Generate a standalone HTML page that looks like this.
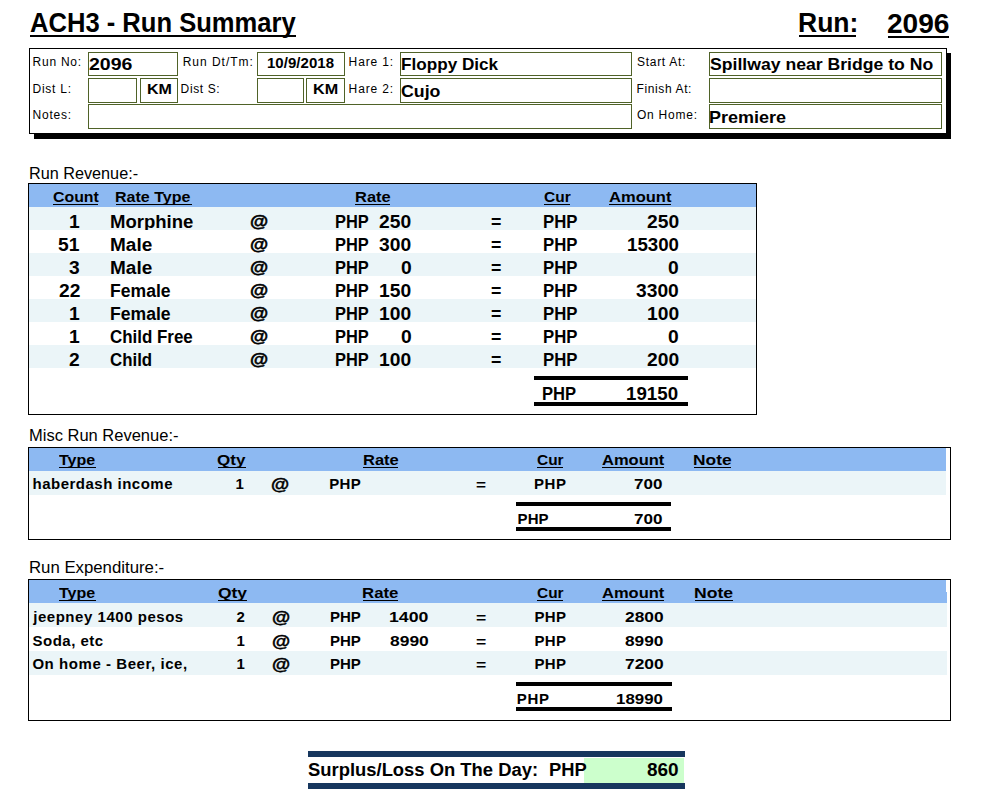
<!DOCTYPE html>
<html><head><meta charset="utf-8"><title>ACH3 - Run Summary</title>
<style>
html,body{margin:0;padding:0;background:#fff;}
body{width:991px;height:803px;position:relative;overflow:hidden;font-family:"Liberation Sans",sans-serif;color:#000;}
.a{position:absolute;}
.t{position:absolute;white-space:nowrap;line-height:1;}
</style></head><body>
<div class="t" style="left:29.96px;top:10px;font-size:27px;font-weight:bold;transform:scaleX(0.9473);transform-origin:0 0;">ACH3 - Run Summary</div>
<div class="a" style="left:30px;top:35px;width:266px;height:2px;background:#000;"></div>
<div class="t" style="left:797.83px;top:10px;font-size:27px;font-weight:bold;transform:scaleX(0.9812);transform-origin:0 0;">Run:</div>
<div class="a" style="left:799px;top:35px;width:57px;height:2px;background:#000;"></div>
<div class="t" style="left:887.43px;top:11px;font-size:27px;font-weight:bold;transform:scaleX(1.0404);transform-origin:0 0;">2096</div>
<div class="a" style="left:888px;top:36px;width:61px;height:2px;background:#000;"></div>
<div class="a" style="left:34px;top:53px;width:917px;height:86px;background:#000;"></div>
<div class="a" style="left:29px;top:48px;width:918px;height:86px;background:#fff;border:1px solid #000;box-sizing:border-box;"></div>
<div class="a" style="left:88px;top:52px;width:90px;height:24px;background:#fff;border:1px solid #4F6228;box-sizing:border-box;"></div>
<div class="a" style="left:257px;top:52px;width:88px;height:24px;background:#fff;border:1px solid #4F6228;box-sizing:border-box;"></div>
<div class="a" style="left:400px;top:52px;width:232px;height:24px;background:#fff;border:1px solid #4F6228;box-sizing:border-box;"></div>
<div class="a" style="left:709px;top:52px;width:233px;height:24px;background:#fff;border:1px solid #4F6228;box-sizing:border-box;"></div>
<div class="a" style="left:88px;top:78px;width:49px;height:25px;background:#fff;border:1px solid #4F6228;box-sizing:border-box;"></div>
<div class="a" style="left:140px;top:78px;width:38px;height:25px;background:#fff;border:1px solid #4F6228;box-sizing:border-box;"></div>
<div class="a" style="left:257px;top:78px;width:47px;height:25px;background:#fff;border:1px solid #4F6228;box-sizing:border-box;"></div>
<div class="a" style="left:306px;top:78px;width:39px;height:25px;background:#fff;border:1px solid #4F6228;box-sizing:border-box;"></div>
<div class="a" style="left:400px;top:78px;width:232px;height:25px;background:#fff;border:1px solid #4F6228;box-sizing:border-box;"></div>
<div class="a" style="left:709px;top:78px;width:233px;height:25px;background:#fff;border:1px solid #4F6228;box-sizing:border-box;"></div>
<div class="a" style="left:88px;top:104px;width:544px;height:25px;background:#fff;border:1px solid #4F6228;box-sizing:border-box;"></div>
<div class="a" style="left:709px;top:104px;width:233px;height:25px;background:#fff;border:1px solid #4F6228;box-sizing:border-box;"></div>
<div class="t" style="left:32.52px;top:56px;font-size:12px;letter-spacing:0.760px;">Run No:</div>
<div class="t" style="left:32.52px;top:83px;font-size:12px;letter-spacing:0.745px;">Dist L:</div>
<div class="t" style="left:32.52px;top:109px;font-size:12px;letter-spacing:0.780px;">Notes:</div>
<div class="t" style="left:182.72px;top:56px;font-size:12px;letter-spacing:0.971px;">Run Dt/Tm:</div>
<div class="t" style="left:180.62px;top:83px;font-size:12px;letter-spacing:0.624px;">Dist S:</div>
<div class="t" style="left:348.62px;top:56px;font-size:12px;letter-spacing:0.855px;">Hare 1:</div>
<div class="t" style="left:348.62px;top:83px;font-size:12px;letter-spacing:0.855px;">Hare 2:</div>
<div class="t" style="left:636.96px;top:56px;font-size:12px;letter-spacing:0.724px;">Start At:</div>
<div class="t" style="left:636.52px;top:83px;font-size:12px;letter-spacing:0.618px;">Finish At:</div>
<div class="t" style="left:636.93px;top:109px;font-size:12px;letter-spacing:0.783px;">On Home:</div>
<div class="t" style="left:89.02px;top:56px;font-size:17px;font-weight:bold;transform:scaleX(1.1471);transform-origin:0 0;">2096</div>
<div class="t" style="left:266.96px;top:55px;font-size:15px;font-weight:bold;letter-spacing:0.047px;">10/9/2018</div>
<div class="t" style="left:146.73px;top:81px;font-size:15px;font-weight:bold;transform:scaleX(1.0694);transform-origin:0 0;">KM</div>
<div class="t" style="left:312.52px;top:81px;font-size:15px;font-weight:bold;transform:scaleX(1.0788);transform-origin:0 0;">KM</div>
<div class="t" style="left:401.05px;top:56px;font-size:17px;font-weight:bold;transform:scaleX(1.0081);transform-origin:0 0;">Floppy Dick</div>
<div class="t" style="left:400.77px;top:83px;font-size:17px;font-weight:bold;transform:scaleX(1.0437);transform-origin:0 0;">Cujo</div>
<div class="t" style="left:710.09px;top:56px;font-size:17px;font-weight:bold;transform:scaleX(1.0363);transform-origin:0 0;">Spillway near Bridge to No</div>
<div class="t" style="left:709.40px;top:109px;font-size:17px;font-weight:bold;transform:scaleX(1.0583);transform-origin:0 0;">Premiere</div>
<div class="t" style="left:28.67px;top:166px;font-size:16px;transform:scaleX(1.0133);transform-origin:0 0;">Run Revenue:-</div>
<div class="a" style="left:28px;top:183px;width:729px;height:232px;background:#fff;border:1px solid #000;box-sizing:border-box;"></div>
<div class="a" style="left:29px;top:184px;width:727px;height:23px;background:#8DB9F2;"></div>
<div class="t" style="left:52.65px;top:189px;font-size:15.5px;font-weight:bold;transform:scaleX(1.0243);transform-origin:0 0;">Count</div>
<div class="a" style="left:53px;top:204px;width:45px;height:1px;background:#000;"></div>
<div class="t" style="left:115.43px;top:189px;font-size:15.5px;font-weight:bold;transform:scaleX(1.0343);transform-origin:0 0;">Rate Type</div>
<div class="a" style="left:116px;top:204px;width:76px;height:1px;background:#000;"></div>
<div class="t" style="left:354.50px;top:189px;font-size:15.5px;font-weight:bold;transform:scaleX(1.0615);transform-origin:0 0;">Rate</div>
<div class="a" style="left:355px;top:204px;width:35px;height:1px;background:#000;"></div>
<div class="t" style="left:543.56px;top:189px;font-size:15.5px;font-weight:bold;transform:scaleX(0.9991);transform-origin:0 0;">Cur</div>
<div class="a" style="left:544px;top:204px;width:26px;height:1px;background:#000;"></div>
<div class="t" style="left:608.79px;top:189px;font-size:15.5px;font-weight:bold;transform:scaleX(1.0661);transform-origin:0 0;">Amount</div>
<div class="a" style="left:609px;top:204px;width:62px;height:1px;background:#000;"></div>
<div class="a" style="left:29px;top:207px;width:727px;height:23px;background:#EBF5F8;"></div>
<div class="t" style="left:69.13px;top:214px;font-size:17.5px;font-weight:bold;transform:scaleX(1.1000);transform-origin:0 0;">1</div>
<div class="t" style="left:109.56px;top:214px;font-size:17.5px;font-weight:bold;transform:scaleX(1.0588);transform-origin:0 0;">Morphine</div>
<div class="t" style="left:249.94px;top:214px;font-size:16px;font-weight:bold;transform:scaleX(1.1630);transform-origin:0 0;-webkit-text-stroke:0.5px #000;">@</div>
<div class="t" style="left:334.80px;top:214px;font-size:17.5px;font-weight:bold;transform:scaleX(0.9382);transform-origin:0 0;">PHP</div>
<div class="t" style="left:379.37px;top:214px;font-size:17.5px;font-weight:bold;transform:scaleX(1.1000);transform-origin:0 0;">250</div>
<div class="t" style="left:490.76px;top:214px;font-size:17.5px;font-weight:bold;transform:scaleX(1.0142);transform-origin:0 0;">=</div>
<div class="t" style="left:542.78px;top:214px;font-size:17.5px;font-weight:bold;transform:scaleX(0.9558);transform-origin:0 0;">PHP</div>
<div class="t" style="left:647.07px;top:214px;font-size:17.5px;font-weight:bold;transform:scaleX(1.1000);transform-origin:0 0;">250</div>
<div class="a" style="left:29px;top:230px;width:727px;height:23px;background:#fff;"></div>
<div class="t" style="left:58.42px;top:237px;font-size:17.5px;font-weight:bold;transform:scaleX(1.1000);transform-origin:0 0;">51</div>
<div class="t" style="left:109.53px;top:237px;font-size:17.5px;font-weight:bold;transform:scaleX(1.0852);transform-origin:0 0;">Male</div>
<div class="t" style="left:249.94px;top:237px;font-size:16px;font-weight:bold;transform:scaleX(1.1630);transform-origin:0 0;-webkit-text-stroke:0.5px #000;">@</div>
<div class="t" style="left:334.80px;top:237px;font-size:17.5px;font-weight:bold;transform:scaleX(0.9382);transform-origin:0 0;">PHP</div>
<div class="t" style="left:379.37px;top:237px;font-size:17.5px;font-weight:bold;transform:scaleX(1.1000);transform-origin:0 0;">300</div>
<div class="t" style="left:490.76px;top:237px;font-size:17.5px;font-weight:bold;transform:scaleX(1.0142);transform-origin:0 0;">=</div>
<div class="t" style="left:542.78px;top:237px;font-size:17.5px;font-weight:bold;transform:scaleX(0.9558);transform-origin:0 0;">PHP</div>
<div class="t" style="left:627.22px;top:237px;font-size:17.5px;font-weight:bold;transform:scaleX(1.0674);transform-origin:0 0;">15300</div>
<div class="a" style="left:29px;top:253px;width:727px;height:23px;background:#EBF5F8;"></div>
<div class="t" style="left:69.29px;top:260px;font-size:17.5px;font-weight:bold;transform:scaleX(1.1000);transform-origin:0 0;">3</div>
<div class="t" style="left:109.53px;top:260px;font-size:17.5px;font-weight:bold;transform:scaleX(1.0852);transform-origin:0 0;">Male</div>
<div class="t" style="left:249.94px;top:260px;font-size:16px;font-weight:bold;transform:scaleX(1.1630);transform-origin:0 0;-webkit-text-stroke:0.5px #000;">@</div>
<div class="t" style="left:334.80px;top:260px;font-size:17.5px;font-weight:bold;transform:scaleX(0.9382);transform-origin:0 0;">PHP</div>
<div class="t" style="left:400.78px;top:260px;font-size:17.5px;font-weight:bold;transform:scaleX(1.1000);transform-origin:0 0;">0</div>
<div class="t" style="left:490.76px;top:260px;font-size:17.5px;font-weight:bold;transform:scaleX(1.0142);transform-origin:0 0;">=</div>
<div class="t" style="left:542.78px;top:260px;font-size:17.5px;font-weight:bold;transform:scaleX(0.9558);transform-origin:0 0;">PHP</div>
<div class="t" style="left:668.48px;top:260px;font-size:17.5px;font-weight:bold;transform:scaleX(1.1000);transform-origin:0 0;">0</div>
<div class="a" style="left:29px;top:276px;width:727px;height:23px;background:#fff;"></div>
<div class="t" style="left:58.66px;top:283px;font-size:17.5px;font-weight:bold;transform:scaleX(1.1000);transform-origin:0 0;">22</div>
<div class="t" style="left:109.62px;top:283px;font-size:17.5px;font-weight:bold;transform:scaleX(1.0044);transform-origin:0 0;">Female</div>
<div class="t" style="left:249.94px;top:283px;font-size:16px;font-weight:bold;transform:scaleX(1.1630);transform-origin:0 0;-webkit-text-stroke:0.5px #000;">@</div>
<div class="t" style="left:334.80px;top:283px;font-size:17.5px;font-weight:bold;transform:scaleX(0.9382);transform-origin:0 0;">PHP</div>
<div class="t" style="left:379.37px;top:283px;font-size:17.5px;font-weight:bold;transform:scaleX(1.1000);transform-origin:0 0;">150</div>
<div class="t" style="left:490.76px;top:283px;font-size:17.5px;font-weight:bold;transform:scaleX(1.0142);transform-origin:0 0;">=</div>
<div class="t" style="left:542.78px;top:283px;font-size:17.5px;font-weight:bold;transform:scaleX(0.9558);transform-origin:0 0;">PHP</div>
<div class="t" style="left:636.37px;top:283px;font-size:17.5px;font-weight:bold;transform:scaleX(1.1000);transform-origin:0 0;">3300</div>
<div class="a" style="left:29px;top:299px;width:727px;height:23px;background:#EBF5F8;"></div>
<div class="t" style="left:69.13px;top:306px;font-size:17.5px;font-weight:bold;transform:scaleX(1.1000);transform-origin:0 0;">1</div>
<div class="t" style="left:109.62px;top:306px;font-size:17.5px;font-weight:bold;transform:scaleX(1.0044);transform-origin:0 0;">Female</div>
<div class="t" style="left:249.94px;top:306px;font-size:16px;font-weight:bold;transform:scaleX(1.1630);transform-origin:0 0;-webkit-text-stroke:0.5px #000;">@</div>
<div class="t" style="left:334.80px;top:306px;font-size:17.5px;font-weight:bold;transform:scaleX(0.9382);transform-origin:0 0;">PHP</div>
<div class="t" style="left:379.37px;top:306px;font-size:17.5px;font-weight:bold;transform:scaleX(1.1000);transform-origin:0 0;">100</div>
<div class="t" style="left:490.76px;top:306px;font-size:17.5px;font-weight:bold;transform:scaleX(1.0142);transform-origin:0 0;">=</div>
<div class="t" style="left:542.78px;top:306px;font-size:17.5px;font-weight:bold;transform:scaleX(0.9558);transform-origin:0 0;">PHP</div>
<div class="t" style="left:647.07px;top:306px;font-size:17.5px;font-weight:bold;transform:scaleX(1.1000);transform-origin:0 0;">100</div>
<div class="a" style="left:29px;top:322px;width:727px;height:23px;background:#fff;"></div>
<div class="t" style="left:69.13px;top:329px;font-size:17.5px;font-weight:bold;transform:scaleX(1.1000);transform-origin:0 0;">1</div>
<div class="t" style="left:110.11px;top:329px;font-size:17.5px;font-weight:bold;transform:scaleX(0.9673);transform-origin:0 0;">Child Free</div>
<div class="t" style="left:249.94px;top:329px;font-size:16px;font-weight:bold;transform:scaleX(1.1630);transform-origin:0 0;-webkit-text-stroke:0.5px #000;">@</div>
<div class="t" style="left:334.80px;top:329px;font-size:17.5px;font-weight:bold;transform:scaleX(0.9382);transform-origin:0 0;">PHP</div>
<div class="t" style="left:400.78px;top:329px;font-size:17.5px;font-weight:bold;transform:scaleX(1.1000);transform-origin:0 0;">0</div>
<div class="t" style="left:490.76px;top:329px;font-size:17.5px;font-weight:bold;transform:scaleX(1.0142);transform-origin:0 0;">=</div>
<div class="t" style="left:542.78px;top:329px;font-size:17.5px;font-weight:bold;transform:scaleX(0.9558);transform-origin:0 0;">PHP</div>
<div class="t" style="left:668.48px;top:329px;font-size:17.5px;font-weight:bold;transform:scaleX(1.1000);transform-origin:0 0;">0</div>
<div class="a" style="left:29px;top:345px;width:727px;height:23px;background:#EBF5F8;"></div>
<div class="t" style="left:69.36px;top:352px;font-size:17.5px;font-weight:bold;transform:scaleX(1.1000);transform-origin:0 0;">2</div>
<div class="t" style="left:110.11px;top:352px;font-size:17.5px;font-weight:bold;transform:scaleX(0.9625);transform-origin:0 0;">Child</div>
<div class="t" style="left:249.94px;top:352px;font-size:16px;font-weight:bold;transform:scaleX(1.1630);transform-origin:0 0;-webkit-text-stroke:0.5px #000;">@</div>
<div class="t" style="left:334.80px;top:352px;font-size:17.5px;font-weight:bold;transform:scaleX(0.9382);transform-origin:0 0;">PHP</div>
<div class="t" style="left:379.37px;top:352px;font-size:17.5px;font-weight:bold;transform:scaleX(1.1000);transform-origin:0 0;">100</div>
<div class="t" style="left:490.76px;top:352px;font-size:17.5px;font-weight:bold;transform:scaleX(1.0142);transform-origin:0 0;">=</div>
<div class="t" style="left:542.78px;top:352px;font-size:17.5px;font-weight:bold;transform:scaleX(0.9558);transform-origin:0 0;">PHP</div>
<div class="t" style="left:647.07px;top:352px;font-size:17.5px;font-weight:bold;transform:scaleX(1.1000);transform-origin:0 0;">200</div>
<div class="a" style="left:534px;top:376px;width:154px;height:4px;background:#000;"></div>
<div class="t" style="left:541.89px;top:386px;font-size:17.5px;font-weight:bold;transform:scaleX(0.9470);transform-origin:0 0;">PHP</div>
<div class="t" style="left:626.32px;top:386px;font-size:17.5px;font-weight:bold;transform:scaleX(1.0695);transform-origin:0 0;">19150</div>
<div class="a" style="left:534px;top:402px;width:154px;height:4px;background:#000;"></div>
<div class="t" style="left:28.65px;top:428px;font-size:16px;transform:scaleX(1.0313);transform-origin:0 0;">Misc Run Revenue:-</div>
<div class="a" style="left:28px;top:447px;width:923px;height:93px;background:#fff;border:1px solid #000;box-sizing:border-box;"></div>
<div class="a" style="left:29px;top:448px;width:917px;height:23px;background:#8DB9F2;"></div>
<div class="a" style="left:29px;top:471px;width:917px;height:24px;background:#EBF5F8;"></div>
<div class="t" style="left:59.12px;top:452px;font-size:15.5px;font-weight:bold;transform:scaleX(1.0346);transform-origin:0 0;">Type</div>
<div class="a" style="left:59px;top:467px;width:37px;height:1px;background:#000;"></div>
<div class="t" style="left:217.30px;top:452px;font-size:15.5px;font-weight:bold;transform:scaleX(1.0988);transform-origin:0 0;">Qty</div>
<div class="a" style="left:218px;top:467px;width:28px;height:1px;background:#000;"></div>
<div class="t" style="left:362.50px;top:452px;font-size:15.5px;font-weight:bold;transform:scaleX(1.0647);transform-origin:0 0;">Rate</div>
<div class="a" style="left:363px;top:467px;width:35px;height:1px;background:#000;"></div>
<div class="t" style="left:536.67px;top:452px;font-size:15.5px;font-weight:bold;transform:scaleX(0.9952);transform-origin:0 0;">Cur</div>
<div class="a" style="left:537px;top:467px;width:26px;height:1px;background:#000;"></div>
<div class="t" style="left:601.89px;top:452px;font-size:15.5px;font-weight:bold;transform:scaleX(1.0644);transform-origin:0 0;">Amount</div>
<div class="a" style="left:602px;top:467px;width:62px;height:1px;background:#000;"></div>
<div class="t" style="left:693.44px;top:452px;font-size:15.5px;font-weight:bold;transform:scaleX(1.1193);transform-origin:0 0;">Note</div>
<div class="a" style="left:694px;top:467px;width:37px;height:1px;background:#000;"></div>
<div class="t" style="left:32.55px;top:476px;font-size:15px;font-weight:bold;letter-spacing:0.495px;">haberdash income</div>
<div class="t" style="left:235.38px;top:476px;font-size:15px;font-weight:bold;">1</div>
<div class="t" style="left:270.94px;top:476px;font-size:16.5px;font-weight:bold;transform:scaleX(1.1277);transform-origin:0 0;-webkit-text-stroke:0.45px #000;">@</div>
<div class="t" style="left:329.20px;top:476px;font-size:15px;font-weight:bold;letter-spacing:0.337px;">PHP</div>
<div class="t" style="left:475.69px;top:477px;font-size:15px;font-weight:bold;transform:scaleX(1.1433);transform-origin:0 0;">=</div>
<div class="t" style="left:533.90px;top:476px;font-size:15px;font-weight:bold;letter-spacing:0.687px;">PHP</div>
<div class="t" style="left:634.27px;top:476px;font-size:15px;font-weight:bold;transform:scaleX(1.1318);transform-origin:0 0;">700</div>
<div class="a" style="left:516px;top:502px;width:155px;height:4px;background:#000;"></div>
<div class="t" style="left:517.60px;top:511px;font-size:15px;font-weight:bold;letter-spacing:0.037px;">PHP</div>
<div class="t" style="left:634.27px;top:511px;font-size:15px;font-weight:bold;transform:scaleX(1.1360);transform-origin:0 0;">700</div>
<div class="a" style="left:516px;top:527px;width:155px;height:4px;background:#000;"></div>
<div class="t" style="left:28.62px;top:560px;font-size:16px;transform:scaleX(1.0478);transform-origin:0 0;">Run Expenditure:-</div>
<div class="a" style="left:28px;top:579px;width:923px;height:142px;background:#fff;border:1px solid #000;box-sizing:border-box;"></div>
<div class="a" style="left:29px;top:580px;width:917px;height:12px;background:#8DB9F2;"></div>
<div class="a" style="left:29px;top:592px;width:918px;height:11px;background:#8DB9F2;"></div>
<div class="a" style="left:29px;top:603px;width:918px;height:24px;background:#EBF5F8;"></div>
<div class="a" style="left:29px;top:651px;width:918px;height:24px;background:#EBF5F8;"></div>
<div class="t" style="left:59.12px;top:585px;font-size:15.5px;font-weight:bold;transform:scaleX(1.0346);transform-origin:0 0;">Type</div>
<div class="a" style="left:59px;top:600px;width:37px;height:1px;background:#000;"></div>
<div class="t" style="left:218.09px;top:585px;font-size:15.5px;font-weight:bold;transform:scaleX(1.1226);transform-origin:0 0;">Qty</div>
<div class="a" style="left:218px;top:600px;width:29px;height:1px;background:#000;"></div>
<div class="t" style="left:361.88px;top:585px;font-size:15.5px;font-weight:bold;transform:scaleX(1.0834);transform-origin:0 0;">Rate</div>
<div class="a" style="left:363px;top:600px;width:35px;height:1px;background:#000;"></div>
<div class="t" style="left:536.67px;top:585px;font-size:15.5px;font-weight:bold;transform:scaleX(0.9952);transform-origin:0 0;">Cur</div>
<div class="a" style="left:537px;top:600px;width:26px;height:1px;background:#000;"></div>
<div class="t" style="left:601.89px;top:585px;font-size:15.5px;font-weight:bold;transform:scaleX(1.0644);transform-origin:0 0;">Amount</div>
<div class="a" style="left:602px;top:600px;width:62px;height:1px;background:#000;"></div>
<div class="t" style="left:694.22px;top:585px;font-size:15.5px;font-weight:bold;transform:scaleX(1.1345);transform-origin:0 0;">Note</div>
<div class="a" style="left:695px;top:600px;width:38px;height:1px;background:#000;"></div>
<div class="t" style="left:33.23px;top:609px;font-size:15px;font-weight:bold;letter-spacing:0.533px;">jeepney 1400 pesos</div>
<div class="t" style="left:236.56px;top:609px;font-size:15px;font-weight:bold;">2</div>
<div class="t" style="left:271.94px;top:609px;font-size:16.5px;font-weight:bold;transform:scaleX(1.1277);transform-origin:0 0;-webkit-text-stroke:0.45px #000;">@</div>
<div class="t" style="left:329.90px;top:609px;font-size:15px;font-weight:bold;letter-spacing:0.037px;">PHP</div>
<div class="t" style="left:389.29px;top:609px;font-size:15px;font-weight:bold;transform:scaleX(1.1789);transform-origin:0 0;">1400</div>
<div class="t" style="left:476.47px;top:610px;font-size:15px;font-weight:bold;transform:scaleX(1.1699);transform-origin:0 0;">=</div>
<div class="t" style="left:534.40px;top:609px;font-size:15px;font-weight:bold;letter-spacing:0.437px;">PHP</div>
<div class="t" style="left:624.80px;top:609px;font-size:15px;font-weight:bold;transform:scaleX(1.1541);transform-origin:0 0;">2800</div>
<div class="t" style="left:32.57px;top:633px;font-size:15px;font-weight:bold;letter-spacing:0.473px;">Soda, etc</div>
<div class="t" style="left:236.38px;top:633px;font-size:15px;font-weight:bold;">1</div>
<div class="t" style="left:271.94px;top:633px;font-size:16.5px;font-weight:bold;transform:scaleX(1.1277);transform-origin:0 0;-webkit-text-stroke:0.45px #000;">@</div>
<div class="t" style="left:329.90px;top:633px;font-size:15px;font-weight:bold;letter-spacing:0.037px;">PHP</div>
<div class="t" style="left:389.85px;top:633px;font-size:15px;font-weight:bold;transform:scaleX(1.1618);transform-origin:0 0;">8990</div>
<div class="t" style="left:476.47px;top:634px;font-size:15px;font-weight:bold;transform:scaleX(1.1699);transform-origin:0 0;">=</div>
<div class="t" style="left:534.40px;top:633px;font-size:15px;font-weight:bold;letter-spacing:0.437px;">PHP</div>
<div class="t" style="left:624.85px;top:633px;font-size:15px;font-weight:bold;transform:scaleX(1.1525);transform-origin:0 0;">8990</div>
<div class="t" style="left:32.38px;top:656px;font-size:15px;font-weight:bold;letter-spacing:0.557px;">On home - Beer, ice,</div>
<div class="t" style="left:236.38px;top:656px;font-size:15px;font-weight:bold;">1</div>
<div class="t" style="left:271.94px;top:656px;font-size:16.5px;font-weight:bold;transform:scaleX(1.1277);transform-origin:0 0;-webkit-text-stroke:0.45px #000;">@</div>
<div class="t" style="left:329.90px;top:656px;font-size:15px;font-weight:bold;letter-spacing:0.037px;">PHP</div>
<div class="t" style="left:476.47px;top:657px;font-size:15px;font-weight:bold;transform:scaleX(1.1699);transform-origin:0 0;">=</div>
<div class="t" style="left:534.40px;top:656px;font-size:15px;font-weight:bold;letter-spacing:0.437px;">PHP</div>
<div class="t" style="left:624.65px;top:656px;font-size:15px;font-weight:bold;transform:scaleX(1.1585);transform-origin:0 0;">7200</div>
<div class="a" style="left:516px;top:682px;width:156px;height:4px;background:#000;"></div>
<div class="t" style="left:516.80px;top:691px;font-size:15px;font-weight:bold;letter-spacing:0.687px;">PHP</div>
<div class="t" style="left:615.74px;top:691px;font-size:15px;font-weight:bold;transform:scaleX(1.1257);transform-origin:0 0;">18990</div>
<div class="a" style="left:516px;top:707px;width:156px;height:4px;background:#000;"></div>
<div class="a" style="left:308px;top:751px;width:377px;height:6px;background:#17375E;"></div>
<div class="a" style="left:584px;top:758px;width:100px;height:25px;background:#CCFFCC;"></div>
<div class="a" style="left:308px;top:783px;width:377px;height:6px;background:#17375E;"></div>
<div class="t" style="left:307.97px;top:762px;font-size:17.5px;font-weight:bold;transform:scaleX(1.0517);transform-origin:0 0;">Surplus/Loss On The Day:</div>
<div class="t" style="left:549.27px;top:762px;font-size:17.5px;font-weight:bold;transform:scaleX(1.0493);transform-origin:0 0;">PHP</div>
<div class="t" style="left:646.70px;top:762px;font-size:17.5px;font-weight:bold;transform:scaleX(1.0851);transform-origin:0 0;">860</div>
</body></html>
